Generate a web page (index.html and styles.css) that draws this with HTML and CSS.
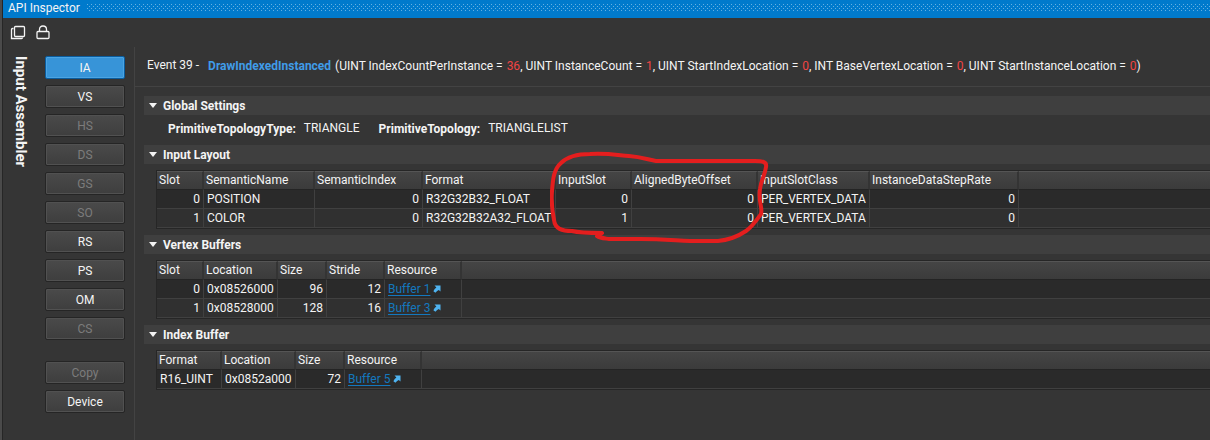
FILE: index.html
```html
<!DOCTYPE html>
<html lang="en">
<head>
<meta charset="utf-8">
<title>API Inspector</title>
<link rel="stylesheet" href="styles.css">
</head>
<body>
<svg class="defs" width="0" height="0" aria-hidden="true">
  <symbol id="jump" viewBox="0 0 8 8"><path d="M1.5 0.5H7.5V6.5L5.8 4.9Q4.2 5.2 2.4 7.8L0.4 6.2Q1.4 3.6 3.4 2.4Z" fill="#4fb3f0"/></symbol>
</svg>
<div class="panel">
  <header class="titlebar"><h1>API Inspector</h1><span class="grip"></span></header>
  <div class="toolbar">
    <button class="tool" type="button" aria-label="Copy window"><svg width="16" height="16" viewBox="0 0 16 16" fill="none" stroke="#f4f4f4" stroke-width="1.3"><rect x="4.5" y="1.5" width="10" height="10" rx="1"/><path d="M3.5 3.5H2.5Q1.5 3.5 1.5 4.5V13.5H11.5Q12.5 13.5 12.5 12.5"/></svg></button>
    <button class="tool" type="button" aria-label="Lock"><svg width="14" height="16" viewBox="0 0 14 16" fill="none" stroke="#f4f4f4" stroke-width="1.3"><rect x="1" y="6.5" width="12" height="7" rx="1"/><path d="M3.5 6.5V4.5Q3.5 1 7 1T10.5 4.5V6.5"/></svg></button>
  </div>
  <div class="body">
    <h2 class="stage-title">Input Assembler</h2>
    <nav class="stages">
      <button class="stage active" type="button">IA</button>
      <button class="stage" type="button">VS</button>
      <button class="stage" type="button" disabled>HS</button>
      <button class="stage" type="button" disabled>DS</button>
      <button class="stage" type="button" disabled>GS</button>
      <button class="stage" type="button" disabled>SO</button>
      <button class="stage" type="button">RS</button>
      <button class="stage" type="button">PS</button>
      <button class="stage" type="button">OM</button>
      <button class="stage" type="button" disabled>CS</button>
      <button class="stage apart" type="button" disabled>Copy</button>
      <button class="stage" type="button">Device</button>
    </nav>
    <main class="content">
      <div class="event"><span>Event 39 -</span><span class="call"><b>DrawIndexedInstanced</b>(UINT IndexCountPerInstance = <i>36</i>, UINT InstanceCount = <i>1</i>, UINT StartIndexLocation = <i>0</i>, INT BaseVertexLocation = <i>0</i>, UINT StartInstanceLocation = <i>0</i>)</span></div>
      <section>
        <h3><span class="caret"></span>Global Settings</h3>
        <dl class="settings">
          <div><dt>PrimitiveTopologyType:</dt><dd>TRIANGLE</dd></div>
          <div><dt>PrimitiveTopology:</dt><dd>TRIANGLELIST</dd></div>
        </dl>
      </section>
      <section>
        <h3><span class="caret"></span>Input Layout</h3>
        <div class="grid">
          <table>
            <colgroup><col class="w47"><col class="w111"><col class="w108"><col class="w133"><col class="w76"><col class="w126"><col class="w112"><col class="w149"><col></colgroup>
            <thead><tr><th>Slot</th><th>SemanticName</th><th>SemanticIndex</th><th>Format</th><th>InputSlot</th><th>AlignedByteOffset</th><th>InputSlotClass</th><th>InstanceDataStepRate</th><th></th></tr></thead>
            <tbody>
              <tr><td class="num">0</td><td>POSITION</td><td class="num">0</td><td>R32G32B32_FLOAT</td><td class="num">0</td><td class="num">0</td><td>PER_VERTEX_DATA</td><td class="num">0</td><td></td></tr>
              <tr><td class="num">1</td><td>COLOR</td><td class="num">0</td><td>R32G32B32A32_FLOAT</td><td class="num">1</td><td class="num">0</td><td>PER_VERTEX_DATA</td><td class="num">0</td><td></td></tr>
            </tbody>
          </table>
          <svg class="marker" width="220" height="96" viewBox="550 150 220 96" fill="none" stroke="#e41e1e" stroke-width="4" stroke-linecap="round" stroke-linejoin="round" aria-hidden="true"><path d="M552 191C553 178 554 169 561 163C568 156 577 154 590 154C607 153 617 155 629 156C642 157 649 160 656 161H755C763 161 767 162 766 167C765 175 761 180 760 189C758 203 763 207 761 214C756 221 752 227 746 231C737 237 730 240 718 241H690C670 240 660 239 640 239H609C602 238 600 238 597 236L602 233C588 233 580 233 572 231C562 231 555 229 554 220C552 210 551 203 552 191Z"/></svg>
        </div>
      </section>
      <section>
        <h3><span class="caret"></span>Vertex Buffers</h3>
        <div class="grid">
          <table>
            <colgroup><col class="w47"><col class="w74"><col class="w49"><col class="w58"><col class="w77"><col></colgroup>
            <thead><tr><th>Slot</th><th>Location</th><th>Size</th><th>Stride</th><th>Resource</th><th></th></tr></thead>
            <tbody>
              <tr><td class="num">0</td><td>0x08526000</td><td class="num">96</td><td class="num">12</td><td><a href="#buffer1">Buffer 1</a><svg class="jump"><use href="#jump"/></svg></td><td></td></tr>
              <tr><td class="num">1</td><td>0x08528000</td><td class="num">128</td><td class="num">16</td><td><a href="#buffer3">Buffer 3</a><svg class="jump"><use href="#jump"/></svg></td><td></td></tr>
            </tbody>
          </table>
        </div>
      </section>
      <section>
        <h3><span class="caret"></span>Index Buffer</h3>
        <div class="grid">
          <table>
            <colgroup><col class="w65"><col class="w74"><col class="w49"><col class="w77"><col></colgroup>
            <thead><tr><th>Format</th><th>Location</th><th>Size</th><th>Resource</th><th></th></tr></thead>
            <tbody>
              <tr><td>R16_UINT</td><td>0x0852a000</td><td class="num">72</td><td><a href="#buffer5">Buffer 5</a><svg class="jump"><use href="#jump"/></svg></td><td></td></tr>
            </tbody>
          </table>
        </div>
      </section>
    </main>
  </div>
</div>
</body>
</html>
```
FILE: styles.css
```css
* { box-sizing: border-box; }
body { margin: 0; background: #353535; color: #f4f4f4; font: 12px/16px Roboto, sans-serif; }
h1, h2, h3, dl, dd { margin: 0; }
button { font: inherit; color: inherit; }
.defs { position: absolute; }
.panel { display: flex; flex-direction: column; min-height: 100vh; border-left: 2px solid #4a4a4a; box-shadow: inset 1px 0 #262626; }
.titlebar { display: flex; align-items: flex-start; gap: 7px; height: 18px; margin-left: 1px; padding-left: 5px; background: #007acc; }
.titlebar h1 { font-size: 12px; font-weight: 400; line-height: 16px; }
.grip { flex: 1; height: 7px; margin-top: 4px; background-image: conic-gradient(at 1px 1px, transparent 75%, #66b0e2 0), conic-gradient(at 1px 1px, transparent 75%, #66b0e2 0); background-size: 4px 4px; background-position: 0 0, 2px 2px; }
.toolbar { display: flex; gap: 10px; height: 29px; padding: 7px 0 0 8px; }
.tool { display: flex; padding: 0; border: 0; background: none; }
.body { display: flex; flex: 1; }
.stage-title { width: 43px; padding: 9px 16px 0 0; font-size: 15px; line-height: 16px; font-weight: 700; writing-mode: vertical-rl; white-space: nowrap; }
.stages { display: flex; flex-direction: column; gap: 6px; width: 89px; padding: 9px 9px 0 0; }
.stage { height: 23px; padding: 0; border: 1px solid #252525; border-radius: 2px; background: linear-gradient(#4a4a4a, #3e3e3e); box-shadow: inset 0 0 0 1px #515151; color: #f4f4f4; }
.stage.active { border-color: #0a5c9e; background: #3794d8; box-shadow: inset 0 0 0 1px #4ba4e2; }
.stage:disabled { color: #7c7c7c; }
.stage.apart { margin-top: 15px; }
.content { flex: 1; min-width: 0; border-left: 1px solid #434343; }
.event { display: flex; gap: 9px; height: 40px; padding: 10px 0 0 12px; margin-bottom: 9px; border-bottom: 1px solid #434343; white-space: nowrap; }
.call { padding-top: 1px; }
.call b { margin-right: 4px; color: #409ce8; }
.call i { margin-left: 1px; font-style: normal; color: #f04444; }
section { padding-left: 9px; }
h3 { display: flex; align-items: center; gap: 6px; height: 19px; padding-left: 5px; background: #3f3f3f; font-size: 12px; font-weight: 700; }
.caret { border: 4px solid transparent; border-top: 5px solid #f4f4f4; border-bottom: 0; }
.settings { display: flex; gap: 19px; height: 30px; padding: 5px 0 0 24px; }
.settings div { display: flex; gap: 8px; }
.settings dt { padding-top: 1px; font-weight: 700; }
.grid { position: relative; margin: 6px 0 6px 12px; border: 1px solid #262626; border-right: 0; }
table { width: 100%; table-layout: fixed; border-collapse: separate; border-spacing: 0; }
th, td { padding: 0 3px; text-align: left; font-weight: 400; white-space: nowrap; line-height: 16px; }
th { height: 19px; padding: 0 2px 1px; border-top: 1px solid #555; border-right: 2px solid #343434; border-bottom: 1px solid #242424; background: linear-gradient(#454545, #3b3b3b); }
td { height: 19px; border-right: 1px solid #404040; border-bottom: 1px solid #404040; background: #2a2a2a; }
tr:nth-child(even) td { background: #303030; }
th:last-child, td:last-child { border-right: 0; }
.num { text-align: right; }
.w47 { width: 47px; } .w49 { width: 49px; } .w58 { width: 58px; } .w65 { width: 65px; }
.w74 { width: 74px; } .w76 { width: 76px; } .w77 { width: 77px; } .w108 { width: 108px; }
.w111 { width: 111px; } .w112 { width: 112px; } .w126 { width: 126px; } .w133 { width: 133px; } .w149 { width: 149px; }
a { color: #1478be; text-underline-offset: 2px; }
.jump { width: 8px; height: 8px; margin-left: 3px; }
.marker { position: absolute; left: 393px; top: -21px; }
```
